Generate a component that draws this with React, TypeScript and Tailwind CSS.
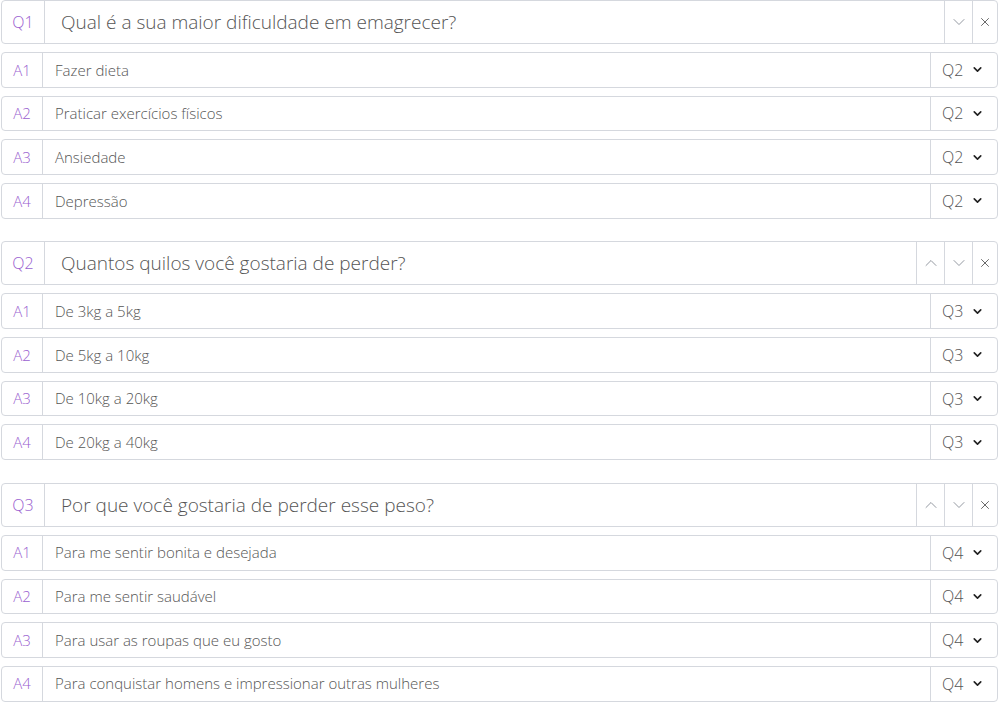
import { ChevronDown, ChevronUp, X } from "lucide-react";

interface Question {
  id: string;
  title: string;
  answers: string[];
  next: string;
  canMoveUp: boolean;
}

const questions: Question[] = [
  {
    id: "Q1",
    title: "Qual é a sua maior dificuldade em emagrecer?",
    answers: ["Fazer dieta", "Praticar exercícios físicos", "Ansiedade", "Depressão"],
    next: "Q2",
    canMoveUp: false,
  },
  {
    id: "Q2",
    title: "Quantos quilos você gostaria de perder?",
    answers: ["De 3kg a 5kg", "De 5kg a 10kg", "De 10kg a 20kg", "De 20kg a 40kg"],
    next: "Q3",
    canMoveUp: true,
  },
  {
    id: "Q3",
    title: "Por que você gostaria de perder esse peso?",
    answers: [
      "Para me sentir bonita e desejada",
      "Para me sentir saudável",
      "Para usar as roupas que eu gosto",
      "Para conquistar homens e impressionar outras mulheres",
    ],
    next: "Q4",
    canMoveUp: true,
  },
];

function QuestionRow({ q }: { q: Question }) {
  return (
    <div className="flex h-[44px] items-stretch rounded border border-[#d5d8de] bg-white">
      <div className="flex w-[43px] shrink-0 items-center justify-center border-r border-[#d5d8de] text-[16px] font-light text-[#9a5fd0]">
        {q.id}
      </div>
      <div className="flex flex-1 items-center pl-[16px] text-[19px] font-light text-[#555]">{q.title}</div>
      {q.canMoveUp && (
        <button type="button" className="flex w-[28px] items-center justify-center border-l border-[#d5d8de] text-[#8a8f98]">
          <ChevronUp size={20} strokeWidth={1.1} aria-hidden="true" />
        </button>
      )}
      <button type="button" className="flex w-[28px] items-center justify-center border-l border-[#d5d8de] text-[#8a8f98]">
        <ChevronDown size={20} strokeWidth={1.1} aria-hidden="true" />
      </button>
      <button type="button" className="flex w-[25px] items-center justify-center border-l border-[#d5d8de] text-[#555]">
        <X size={14} strokeWidth={1.5} aria-hidden="true" />
      </button>
    </div>
  );
}

function AnswerRow({ label, text, next }: { label: string; text: string; next: string }) {
  return (
    <div className="flex h-[35.67px] items-stretch rounded border border-[#d5d8de] bg-white">
      <div className="flex w-[41px] shrink-0 items-center justify-center border-r border-[#d5d8de] text-[15px] font-light text-[#9a5fd0]">
        {label}
      </div>
      <div className="flex flex-1 items-center pl-[12px] text-[15px] font-light text-[#555]">{text}</div>
      <div className="flex w-[67px] items-center border-l border-[#d5d8de] pl-[11px] text-[16px] font-light text-[#555]">
        <span>{next}</span>
        <ChevronDown size={13} strokeWidth={3} className="ml-[8px] text-[#222]" aria-hidden="true" />
      </div>
    </div>
  );
}

export default function App() {
  return (
    <div className="bg-white pl-[1px] pr-[2px]" style={{ fontFamily: '"Open Sans", sans-serif' }}>
      {questions.map((q) => (
        <section key={q.id} className="flex flex-col gap-[8px] pb-[22.83px]">
          <QuestionRow q={q} />
          {q.answers.map((a, i) => (
            <AnswerRow key={a} label={`A${i + 1}`} text={a} next={q.next} />
          ))}
        </section>
      ))}
    </div>
  );
}
